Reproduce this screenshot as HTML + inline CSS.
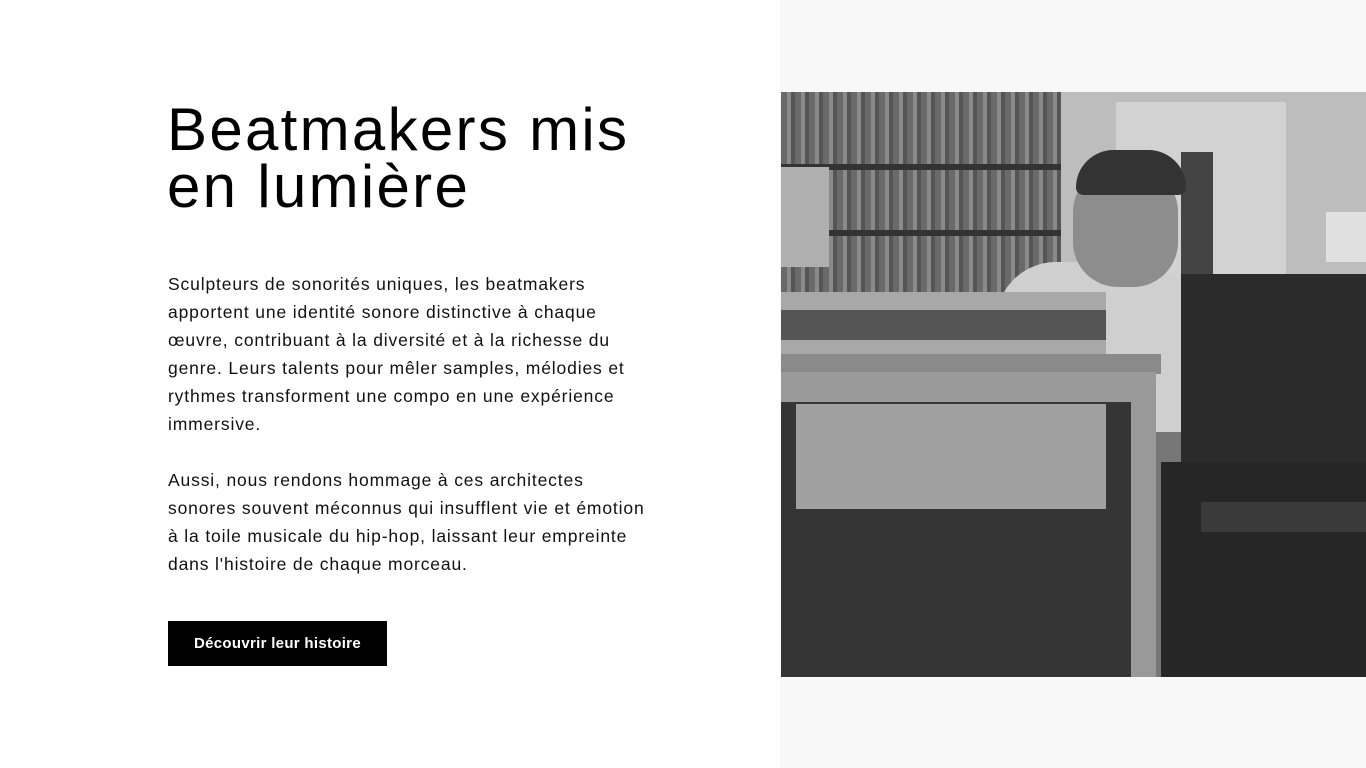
<!DOCTYPE html>
<html><head><meta charset="utf-8"><style>
*{margin:0;padding:0;box-sizing:border-box}
body{width:1366px;height:768px;background:#fff;position:relative;overflow:hidden;font-family:"Liberation Sans",sans-serif}
.right{position:absolute;left:780px;top:0;width:586px;height:768px;background:#f8f8f8}
h1{position:absolute;left:167px;top:101px;font-size:60px;font-weight:400;line-height:57px;color:#000;letter-spacing:2.3px;white-space:nowrap}
.p{position:absolute;left:168px;width:520px;font-size:17.5px;line-height:28px;color:#111;letter-spacing:0.85px;white-space:nowrap}
.btn{position:absolute;left:168px;top:621px;width:219px;height:45px;background:#000;color:#fff;font-weight:700;font-size:15px;line-height:45px;text-align:center;letter-spacing:0.3px}
.ph{position:absolute;left:781px;top:92px;width:585px;height:585px;background:#777;overflow:hidden}
.ph div{position:absolute}
</style></head><body>
<div class="right"></div>
<h1>Beatmakers mis<br>en lumière</h1>
<div class="p" style="top:270px">Sculpteurs de sonorités uniques, les beatmakers<br>apportent une identité sonore distinctive à chaque<br>œuvre, contribuant à la diversité et à la richesse du<br>genre. Leurs talents pour mêler samples, mélodies et<br>rythmes transforment une compo en une expérience<br>immersive.</div>
<div class="p" style="top:466px">Aussi, nous rendons hommage à ces architectes<br>sonores souvent méconnus qui insufflent vie et émotion<br>à la toile musicale du hip-hop, laissant leur empreinte<br>dans l'histoire de chaque morceau.</div>
<div class="btn">Découvrir leur histoire</div>
<div class="ph">
<div style="left:0;top:0;width:285px;height:200px;background:repeating-linear-gradient(90deg,#6a6a6a 0 6px,#8a8a8a 6px 10px,#555 10px 14px)"></div>
<div style="left:0;top:72px;width:280px;height:6px;background:#333"></div>
<div style="left:0;top:138px;width:280px;height:6px;background:#333"></div>
<div style="left:0;top:75px;width:48px;height:100px;background:#b0b0b0"></div>
<div style="left:280px;top:0;width:305px;height:200px;background:#bdbdbd"></div>
<div style="left:335px;top:10px;width:170px;height:185px;background:#d2d2d2"></div>
<div style="left:400px;top:60px;width:32px;height:130px;background:#444"></div>
<div style="left:545px;top:120px;width:40px;height:50px;background:#e0e0e0"></div>
<div style="left:215px;top:170px;width:200px;height:170px;background:#cfcfcf;border-radius:60px 60px 0 0"></div>
<div style="left:292px;top:75px;width:105px;height:120px;background:#8d8d8d;border-radius:45px"></div>
<div style="left:295px;top:58px;width:110px;height:45px;background:#333;border-radius:50px 50px 10px 10px"></div>
<div style="left:0;top:200px;width:325px;height:62px;background:#a8a8a8"></div>
<div style="left:0;top:218px;width:325px;height:30px;background:#555"></div>
<div style="left:0;top:262px;width:380px;height:20px;background:#8a8a8a"></div>
<div style="left:0;top:280px;width:375px;height:30px;background:#9a9a9a"></div>
<div style="left:0;top:310px;width:360px;height:275px;background:#353535"></div>
<div style="left:15px;top:312px;width:310px;height:105px;background:#a0a0a0"></div>
<div style="left:350px;top:295px;width:25px;height:290px;background:#999"></div>
<div style="left:400px;top:182px;width:185px;height:190px;background:#2b2b2b"></div>
<div style="left:380px;top:370px;width:205px;height:215px;background:#262626"></div>
<div style="left:420px;top:410px;width:165px;height:30px;background:#3a3a3a"></div>
</div>
</body></html>
